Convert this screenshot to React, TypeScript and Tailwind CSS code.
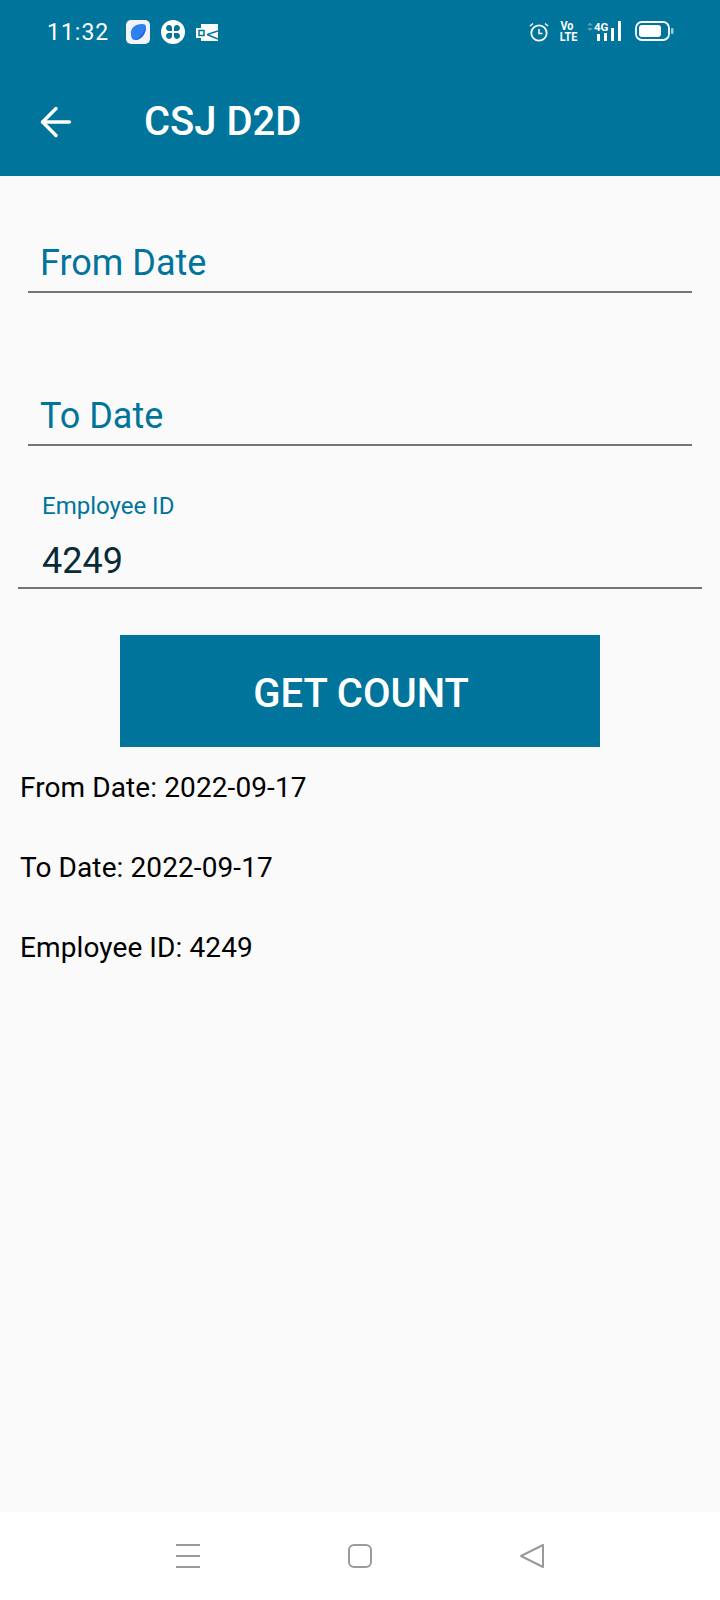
import { ArrowLeft } from "lucide-react";

const ROBOTO = "font-['Roboto',sans-serif]";

function StatusBar() {
  return (
    <div className="h-[60px] pl-[47px] pr-[46px] pt-[17px] flex justify-between text-white">
      <div className="flex items-start">
        <span className="text-[23px] leading-[32px] tracking-[1px]">11:32</span>
        <div className="flex items-center gap-[11px] ml-[17px] mt-[3px]">
          <svg width="24" height="24" viewBox="0 0 24 24">
            <rect width="24" height="24" rx="5" fill="#f1f4f8" />
            <path d="M5 15C4 8 9 4 16 4c3 0 4 1 4 3 0 7-5 13-11 13-2 0-4-2-4-5z" fill="#2f80f0" />
            <path d="M20 7c0 7-5 13-11 13 6-3 9-8 11-13z" fill="#2a5fe0" />
          </svg>
          <svg width="24" height="24" viewBox="0 0 24 24">
            <circle cx="12" cy="12" r="12" fill="#fff" />
            <g fill="#00749b">
              <path d="M11 11H7.5A3 3 0 1 1 11 7.5z" />
              <path d="M13 11h3.500A3 3 0 1 0 13 7.500z" />
              <path d="M11 13H7.500A3 3 0 1 0 11 16.500z" />
              <path d="M13 13h3.500A3 3 0 1 1 13 16.500z" />
            </g>
          </svg>
          <svg width="22" height="17" viewBox="0 0 22 17">
            <path d="M5 0h17v17H5v-3h6V4H5z" fill="#fff" />
            <path d="M22 7l-11 3.500L22 15" fill="none" stroke="#00749b" strokeWidth="1.500" />
            <rect x="0" y="4" width="11" height="10" fill="#fff" />
            <rect x="3" y="6.500" width="5" height="5" fill="none" stroke="#00749b" strokeWidth="1.500" />
          </svg>
        </div>
      </div>
      <div className="flex items-start gap-[11px] mt-[4px]">
        <svg width="20" height="20" viewBox="0 0 20 20" fill="none" stroke="#fff" strokeWidth="1.800" className="mt-[1px]">
          <circle cx="10" cy="11" r="7.700" />
          <path d="M10 7v4.500h3.500" strokeWidth="1.500" />
          <path d="M1 4l3-2.500M19 4l-3-2.500" strokeWidth="1.500" />
        </svg>
        <div className="w-[16px] ml-[-1px] text-[12px] leading-[11px] font-bold text-center font-['Roboto',sans-serif] [transform:scaleX(0.9)]">
          <div>Vo</div>
          <div>LTE</div>
        </div>
        <svg width="37" height="20" viewBox="0 0 37 20" fill="#fff" className="ml-[-1px]">
          <path d="M2 4.500l3-3 3 3zM2 7l3 3 3-3z" fill="#5f9fb8" />
          <rect x="12" y="13" width="3" height="7" />
          <rect x="19" y="12" width="3" height="8" />
          <rect x="26" y="7" width="3" height="13" />
          <rect x="33" y="0" width="3" height="20" />
          <text x="9" y="10" fontSize="11.500" fontWeight="700" fontFamily="Roboto, sans-serif">4G</text>
        </svg>
        <svg width="39" height="20" viewBox="0 0 39 20" className="ml-[2px]">
          <rect x="1" y="1" width="33" height="18" rx="6" fill="none" stroke="#fff" strokeWidth="1.800" />
          <rect x="4" y="4" width="22" height="12" rx="3" fill="#fff" />
          <rect x="36" y="7" width="2.500" height="6" rx="1" fill="#9cc7d6" />
        </svg>
      </div>
    </div>
  );
}

function DateField({ label, className }: { label: string; className: string }) {
  return (
    <div className={`mx-[28px] border-b-2 border-[#757575] pl-[12px] h-[51px] ${className}`}>
      <div className="text-[#00749b] text-[36px] leading-[42px] font-normal">{label}</div>
    </div>
  );
}

function NavBar() {
  return (
    <div className="h-[88px] bg-white relative flex items-start justify-between pl-[176px] pr-[176px] pt-[32px]">
      <svg width="24" height="24" viewBox="0 0 24 24" stroke="#9a9a9a" strokeWidth="2">
        <path d="M0 1h24M0 12h24M0 23h24" />
      </svg>
      <svg width="24" height="24" viewBox="0 0 24 24" fill="none" stroke="#9a9a9a" strokeWidth="2">
        <rect x="1" y="1" width="22" height="22" rx="5" />
      </svg>
      <svg width="24" height="24" viewBox="0 0 24 24" fill="none" stroke="#9a9a9a" strokeWidth="2" strokeLinejoin="round">
        <path d="M23 1v22L1 12z" />
      </svg>
    </div>
  );
}

export default function App() {
  return (
    <div className={`w-[720px] h-[1600px] bg-[#fafafa] flex flex-col ${ROBOTO}`}>
      <div className="h-[176px] bg-[#00749b]">
        <StatusBar />
        <div className="flex items-center h-[116px] pt-[7px] text-white">
          <ArrowLeft size={46} strokeWidth={1.8} className="ml-[33px]" />
          <h1 className="ml-[65px] text-[40px] font-medium">CSJ D2D</h1>
        </div>
      </div>

      <div className="flex-1">
        <DateField label="From Date" className="mt-[66px]" />
        <DateField label="To Date" className="mt-[102px]" />

        <div className="mx-[18px] mt-[36px] border-b-2 border-[#757575] pl-[25px] pt-[6px] h-[107px]">
          <div className="text-[#00749b] text-[24px] leading-[36px] ml-[-1px]">Employee ID</div>
          <div className="text-[#0a2a38] text-[36px] leading-[48px] mt-[13px] ml-[-1px]">4249</div>
        </div>

        <button className="block mx-auto mt-[46px] w-[480px] h-[112px] bg-[#00749b] text-white text-[40px] font-medium pt-[6px] pl-[2px]">
          GET COUNT
        </button>

        <div className="px-[20px] mt-[21px] text-black text-[28px] leading-[40px] tracking-[0.1px] flex flex-col gap-[40px]">
          <div>From Date: 2022-09-17</div>
          <div>To Date: 2022-09-17</div>
          <div>Employee ID: 4249</div>
        </div>
      </div>

      <NavBar />
    </div>
  );
}
